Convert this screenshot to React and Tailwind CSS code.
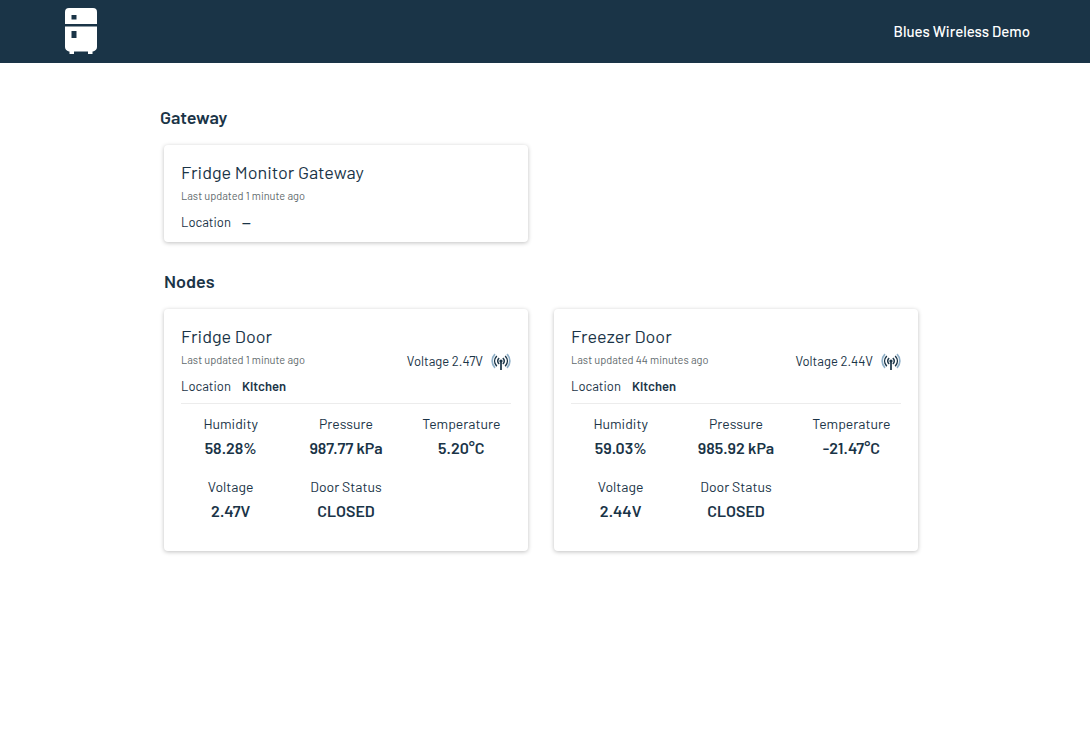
const nodes = [
  {
    name: "Fridge Door",
    updated: "Last updated 1 minute ago",
    location: "Kitchen",
    voltage: "2.47V",
    readings: [
      ["Humidity", "58.28%"],
      ["Pressure", "987.77 kPa"],
      ["Temperature", "5.20°C"],
      ["Voltage", "2.47V"],
      ["Door Status", "CLOSED"],
    ],
  },
  {
    name: "Freezer Door",
    updated: "Last updated 44 minutes ago",
    location: "Kitchen",
    voltage: "2.44V",
    readings: [
      ["Humidity", "59.03%"],
      ["Pressure", "985.92 kPa"],
      ["Temperature", "-21.47°C"],
      ["Voltage", "2.44V"],
      ["Door Status", "CLOSED"],
    ],
  },
];

function FridgeLogo() {
  return (
    <svg className="block" width="32" height="46" viewBox="0 0 32 46" aria-hidden="true">
      <path
        fill="#fff"
        fillRule="evenodd"
        d="M4 0H28Q32 0 32 4V16H0V4Q0 0 4 0ZM6.500 7H11.500V11.500H6.500Z"
      />
      <path
        fill="#fff"
        fillRule="evenodd"
        d="M0 18.500H32V39Q32 42 28 43.500H27.500V46H23V43.500H9V46H4.500V43.500H4Q0 42 0 39ZM6.500 23H11.500V30H6.500Z"
      />
    </svg>
  );
}

function SignalIcon() {
  return (
    <svg width="20" height="18" viewBox="0 -2 20 18" fill="none" aria-hidden="true">
      <g stroke="#8fb0c8" strokeWidth="1.700">
        <path d="M4 0.200C0.200 4 0.200 10 4 13.800" />
        <path d="M16 0.200C19.800 4 19.800 10 16 13.800" />
      </g>
      <g stroke="#1a3447" strokeWidth="1.500">
        <path d="M5.800 2C2.900 5 2.900 9.200 5.800 12.200" />
        <path d="M14.200 2C17.100 5 17.100 9.200 14.200 12.200" />
        <path d="M8.200 10C6.200 8.600 6.200 5.600 8.200 4.200" />
        <path d="M11.800 10C13.800 8.600 13.800 5.600 11.800 4.200" />
        <path d="M10 7V16" strokeWidth="1.700" />
      </g>
      <circle cx="10" cy="7" r="1.600" fill="#1a3447" />
    </svg>
  );
}

function Card({ children, className }) {
  return (
    <article
      className={`rounded bg-white px-[17px] pt-[15px] shadow-[0_1px_4px_rgba(0,0,0,0.25)] ${className}`}
    >
      {children}
    </article>
  );
}

function CardHeading({ name, updated }) {
  return (
    <>
      <h3 className="text-lg leading-6">{name}</h3>
      <p className="text-[11px] leading-6 text-[#5f6a6d]">{updated}</p>
    </>
  );
}

function Location({ value }) {
  return (
    <p className="flex gap-[11px] text-[13px] leading-7">
      <span>Location</span>
      <span className="font-semibold">{value}</span>
    </p>
  );
}

function NodeCard({ node }) {
  return (
    <Card className="pb-7">
      <div className="flex items-center justify-between border-b border-[#ececec] pb-[3px]">
        <div>
          <CardHeading name={node.name} updated={node.updated} />
          <Location value={node.location} />
        </div>
        <div className="flex items-center gap-2 pb-[2px] text-[13px] leading-6">
          <span>Voltage {node.voltage}</span>
          <SignalIcon />
        </div>
      </div>
      <dl className="-mx-2 mt-2 grid grid-cols-3 gap-y-[15px] text-center">
        {node.readings.map(([label, value]) => (
          <div key={label}>
            <dt className="text-sm leading-6">{label}</dt>
            <dd className="text-base leading-6 font-semibold">{value}</dd>
          </div>
        ))}
      </dl>
    </Card>
  );
}

export default function App() {
  return (
    <div className="min-h-screen bg-white font-['Barlow','Roboto',sans-serif] text-[#1a3447]">
      <header className="flex h-[63px] items-center justify-between bg-[#1a3447] pr-[60px] pb-[2px] pl-[65px] text-white">
        <a href="#" aria-label="Home">
          <FridgeLogo />
        </a>
        <span className="text-[15px] leading-6 font-medium">Blues Wireless Demo</span>
      </header>
      <main className="mx-auto max-w-[770px] pt-[42px]">
        <h2 className="text-lg leading-6 font-semibold">Gateway</h2>
        <div className="mt-4 grid grid-cols-2 gap-[26px] pr-3 pl-1">
          <Card className="pb-[6px]">
            <CardHeading name="Fridge Monitor Gateway" updated="Last updated 1 minute ago" />
            <Location value="—" />
          </Card>
        </div>
        <h2 className="mt-[27px] pl-1 text-lg leading-6 font-semibold">Nodes</h2>
        <div className="mt-4 grid grid-cols-2 gap-[26px] pr-3 pl-1">
          {nodes.map((node) => (
            <NodeCard key={node.name} node={node} />
          ))}
        </div>
      </main>
    </div>
  );
}
